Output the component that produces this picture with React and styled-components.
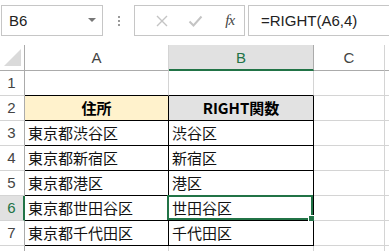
import styled, { createGlobalStyle, css } from "styled-components";

const GlobalStyle = createGlobalStyle`
  html, body {
    margin: 0;
    padding: 0;
    background: #fff;
  }
  body {
    font-family: "Noto Sans CJK JP", "Liberation Sans", sans-serif;
    overflow: hidden;
  }
`;

const GREEN = "#217346";
const GRID = "#d4d4d4";

const Page = styled.div`
  width: 389px;
  height: 251px;
  overflow: hidden;
  background: #fff;
`;

/* ---------- formula bar ---------- */
const FormulaBar = styled.div`
  display: flex;
  align-items: center;
  height: 31px;
  padding: 5px 0 9px 1px;
`;

const NameBox = styled.div`
  box-sizing: border-box;
  width: 102px;
  height: 31px;
  border: 1px solid #c6c6c6;
  display: flex;
  align-items: center;
  justify-content: space-between;
  padding: 0 6px 1px 7px;
  font-family: "Liberation Sans", sans-serif;
  font-size: 15px;
  color: #222;
`;

const DropArrow = styled.span`
  width: 0;
  height: 0;
  border-left: 4px solid transparent;
  border-right: 4px solid transparent;
  border-top: 4px solid #777;
  margin-bottom: 1px;
`;

const Dots = styled.div`
  width: 31px;
  display: flex;
  flex-direction: column;
  align-items: center;
  gap: 2px;
  span {
    width: 2px;
    height: 2px;
    background: #9a9a9a;
  }
`;

const ButtonBox = styled.div`
  box-sizing: border-box;
  width: 111px;
  height: 31px;
  border: 1px solid #c6c6c6;
  display: flex;
  align-items: center;
  padding-left: 11px;
`;

const IconSlot = styled.div`
  width: 34px;
  display: flex;
  align-items: center;
  justify-content: center;
`;

const Fx = styled.span`
  font-family: "Liberation Serif", serif;
  font-style: italic;
  font-size: 15px;
  color: #444;
  letter-spacing: -1px;
  margin-left: 4px;
`;

const FormulaInput = styled.div`
  box-sizing: border-box;
  flex: 1;
  height: 31px;
  margin-left: 3px;
  border: 1px solid #c6c6c6;
  border-right: none;
  display: flex;
  align-items: center;
  padding: 0 0 1px 12px;
  font-family: "Liberation Sans", sans-serif;
  font-size: 15px;
  color: #222;
`;

/* ---------- sheet ---------- */
const Sheet = styled.div`
  display: grid;
  grid-template-columns: 25px 144px 145px 71px 1fr;
  grid-auto-rows: 25px;
  grid-template-rows: 26px;
`;

const Cell = styled.div`
  box-sizing: border-box;
  position: relative;
  border-right: 1px solid ${GRID};
  border-bottom: 1px solid ${GRID};
  display: flex;
  align-items: center;
  padding: 0 3px 1px;
  font-size: 15px;
  line-height: 1;
  color: #111;
  white-space: nowrap;
  background: ${(p) => p.$bg || "#fff"};
  ${(p) => p.$boxed && css`
    border-right-color: #000;
    border-bottom-color: #000;
  `}
  ${(p) => p.$topLine && css`
    border-bottom-color: #000;
  `}
  ${(p) => p.$head && css`
    justify-content: center;
    font-weight: bold;
    color: #000;
  `}
`;

const ColHead = styled.div`
  box-sizing: border-box;
  display: flex;
  align-items: center;
  justify-content: center;
  border-right: 1px solid ${GRID};
  border-bottom: 1px solid #ababab;
  font-family: "Liberation Sans", sans-serif;
  font-size: 15px;
  color: #444;
  padding-bottom: 1px;
  ${(p) => p.$active && css`
    background: #e1e1e1;
    color: ${GREEN};
    border-bottom: 2px solid ${GREEN};
    border-right-color: #ababab;
    padding-bottom: 0;
  `}
`;

const Corner = styled.div`
  box-sizing: border-box;
  border-right: 1px solid #ababab;
  border-bottom: 1px solid #ababab;
  position: relative;
  &::after {
    content: "";
    position: absolute;
    right: 3px;
    bottom: 4px;
    width: 0;
    height: 0;
    border-left: 17px solid transparent;
    border-bottom: 17px solid #dadada;
  }
`;

const RowHead = styled.div`
  box-sizing: border-box;
  display: flex;
  align-items: center;
  justify-content: center;
  border-right: 1px solid #ababab;
  border-bottom: 1px solid ${GRID};
  font-family: "Liberation Sans", sans-serif;
  font-size: 15px;
  color: #444;
  padding: 0 1px 1px 0;
  ${(p) => p.$active && css`
    background: #e1e1e1;
    color: ${GREEN};
    border-right: 2px solid ${GREEN};
    padding-right: 0;
  `}
`;

const Selection = styled.div`
  position: absolute;
  top: -1px;
  left: -2px;
  right: 0;
  bottom: 0;
  border: 2px solid ${GREEN};
  pointer-events: none;
  &::after {
    content: "";
    position: absolute;
    right: -5px;
    bottom: -5px;
    width: 6px;
    height: 6px;
    background: ${GREEN};
    border: 1px solid #fff;
  }
`;

const rows = [
  { n: 1, a: "", b: "" },
  { n: 2, a: "住所", b: "RIGHT関数", head: true },
  { n: 3, a: "東京都渋谷区", b: "渋谷区" },
  { n: 4, a: "東京都新宿区", b: "新宿区" },
  { n: 5, a: "東京都港区", b: "港区" },
  { n: 6, a: "東京都世田谷区", b: "世田谷区", active: true },
  { n: 7, a: "東京都千代田区", b: "千代田区" },
  // row 8 only peeks in at the bottom edge, its number is below the fold
  { n: 8, a: "", b: "", hidden: true },
];

const CloseIcon = () => (
  <svg width="14" height="14" viewBox="0 0 14 14">
    <path d="M2 2 L12 12 M12 2 L2 12" stroke="#c4c4c4" strokeWidth="1.4" fill="none" />
  </svg>
);

const CheckIcon = () => (
  <svg width="15" height="14" viewBox="0 0 15 14">
    <path d="M1.5 7.5 L5.5 11.5 L13.5 2.5" stroke="#c4c4c4" strokeWidth="2" fill="none" />
  </svg>
);

export default function App() {
  return (
    <Page>
      <GlobalStyle />
      <FormulaBar>
        <NameBox>
          <span>B6</span>
          <DropArrow />
        </NameBox>
        <Dots>
          <span />
          <span />
          <span />
        </Dots>
        <ButtonBox>
          <IconSlot><CloseIcon /></IconSlot>
          <IconSlot><CheckIcon /></IconSlot>
          <IconSlot><Fx>fx</Fx></IconSlot>
        </ButtonBox>
        <FormulaInput>=RIGHT(A6,4)</FormulaInput>
      </FormulaBar>

      <Sheet>
        <Corner />
        <ColHead>A</ColHead>
        <ColHead $active>B</ColHead>
        <ColHead>C</ColHead>
        <ColHead />
        {rows.map((r) => {
          const inTable = r.n >= 2 && r.n <= 7;
          return [
            <RowHead key={`h${r.n}`} $active={r.active}>
              {r.hidden ? "" : r.n}
            </RowHead>,
            <Cell
              key={`a${r.n}`}
              $boxed={inTable}
              $topLine={r.n === 1}
              $head={r.head}
              $bg={r.head ? "#fff2cc" : undefined}
            >
              {r.a}
            </Cell>,
            <Cell
              key={`b${r.n}`}
              $boxed={inTable}
              $topLine={r.n === 1}
              $head={r.head}
              $bg={r.head ? "#e2e2e2" : undefined}
            >
              {r.b}
              {r.active && <Selection />}
            </Cell>,
            <Cell key={`c${r.n}`} />,
            <Cell key={`d${r.n}`} />,
          ];
        })}
      </Sheet>
    </Page>
  );
}
